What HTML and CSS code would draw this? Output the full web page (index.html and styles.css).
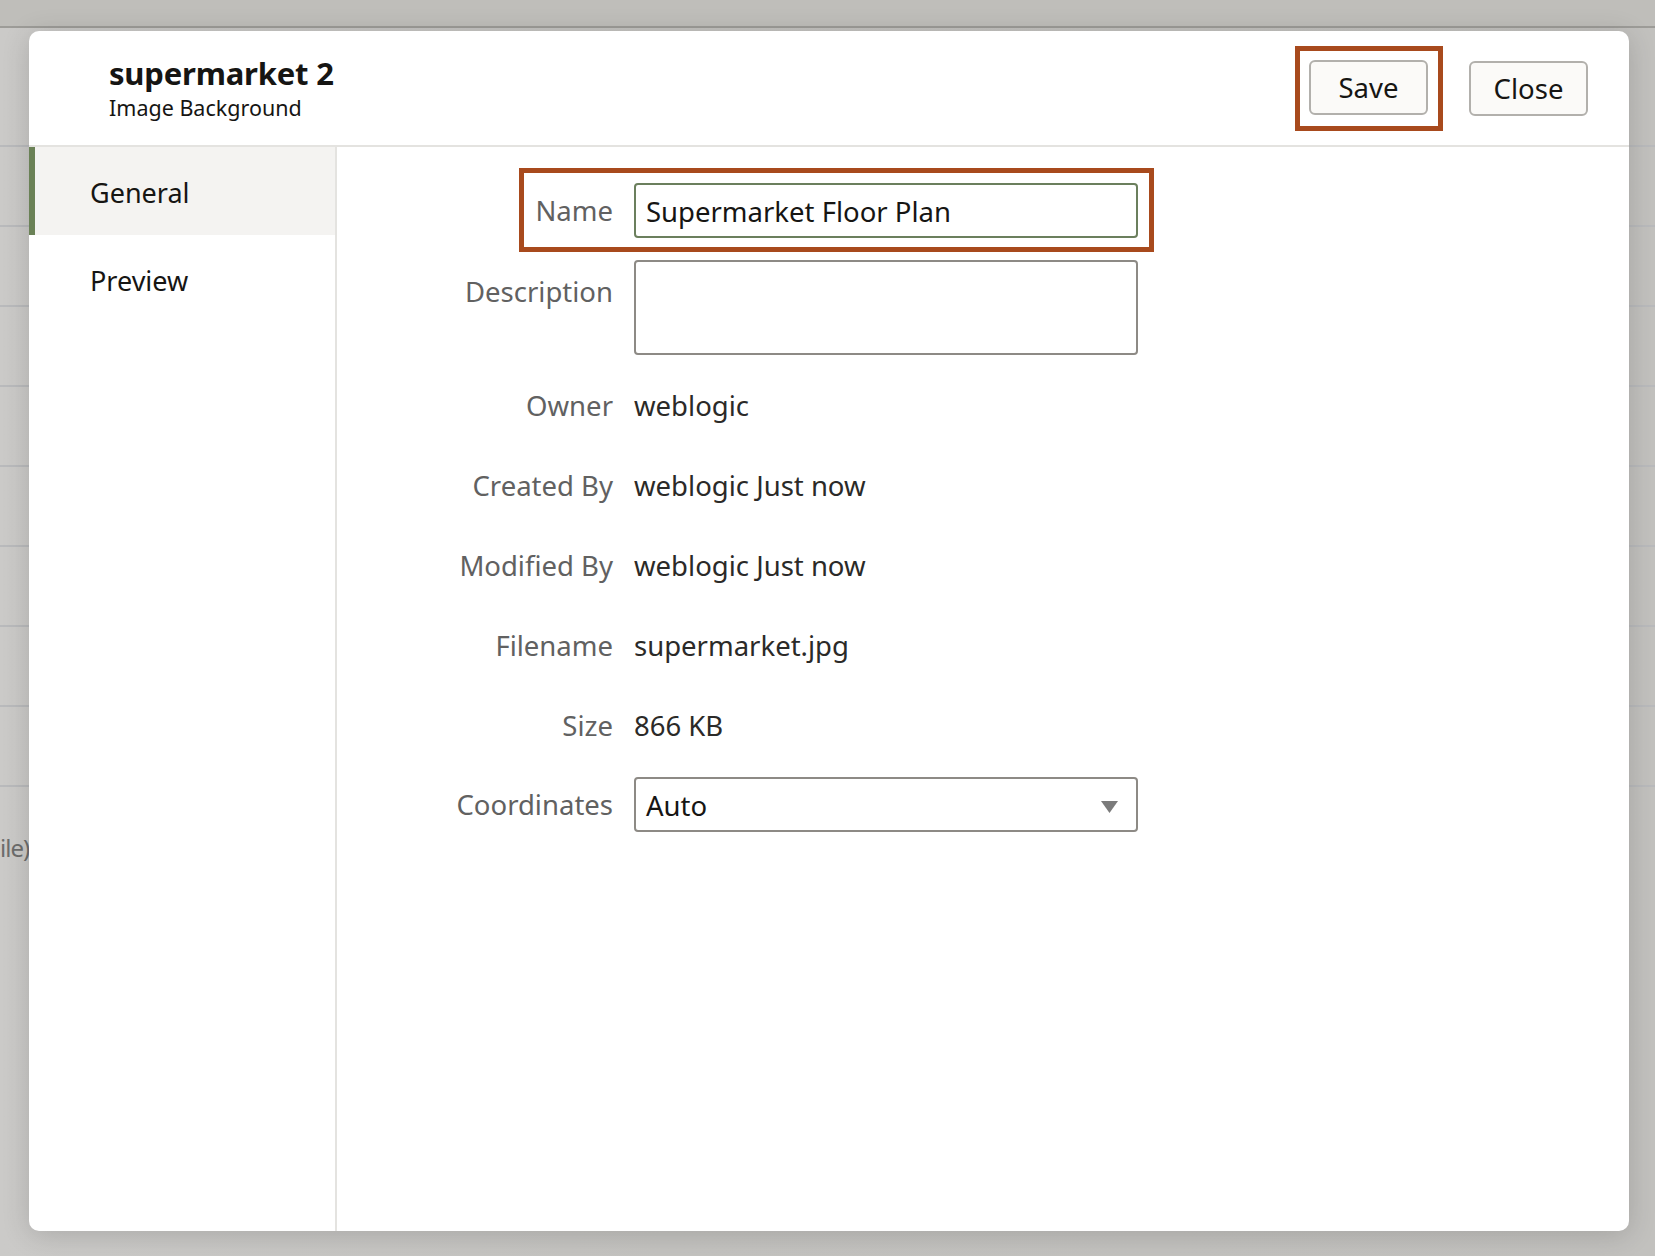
FILE: index.html
```html
<!DOCTYPE html>
<html lang="en">
<head>
<meta charset="utf-8">
<title>supermarket 2</title>
<link rel="stylesheet" href="styles.css">
</head>
<body>
<div class="backdrop">
  <div class="bg-strip"></div>
  <div class="bg-head"></div>
  <div class="bg-row"></div>
  <div class="bg-row"></div>
  <div class="bg-row"></div>
  <div class="bg-row"></div>
  <div class="bg-row"></div>
  <div class="bg-row"></div>
  <div class="bg-row"></div>
  <div class="bg-row"></div>
  <div class="bg-last"><span class="bg-text">ile)</span></div>
</div>

<div class="dialog">
  <header class="dlg-header">
    <div class="dlg-titles">
      <div class="dlg-title">supermarket 2</div>
      <div class="dlg-subtitle">Image Background</div>
    </div>
    <div class="dlg-actions">
      <span class="highlight-btn"><button class="btn">Save</button></span>
      <button class="btn">Close</button>
    </div>
  </header>
  <div class="dlg-body">
    <nav class="side">
      <div class="side-item selected">General</div>
      <div class="side-item">Preview</div>
    </nav>
    <main class="main">
      <div class="highlight-row"></div>
      <div class="form">
        <label class="lbl lbl-ctl">Name</label>
        <div class="input input-active">Supermarket Floor Plan</div>

        <label class="lbl lbl-ctl lbl-top">Description</label>
        <div class="textarea"></div>

        <div class="lbl lbl-txt">Owner</div>
        <div class="val">weblogic</div>

        <div class="lbl lbl-txt">Created By</div>
        <div class="val">weblogic Just now</div>

        <div class="lbl lbl-txt">Modified By</div>
        <div class="val">weblogic Just now</div>

        <div class="lbl lbl-txt">Filename</div>
        <div class="val">supermarket.jpg</div>

        <div class="lbl lbl-txt">Size</div>
        <div class="val">866 KB</div>

        <label class="lbl lbl-ctl">Coordinates</label>
        <div class="input select">
          <span>Auto</span>
          <svg class="caret" width="17" height="12" viewBox="0 0 17 12"><path d="M0 0H17L8.5 12Z" fill="#7b7b7b"/></svg>
        </div>
      </div>
    </main>
  </div>
</div>
</body>
</html>
```

FILE: styles.css
```css
* { box-sizing: border-box; }

html, body {
  margin: 0;
  padding: 0;
}

body {
  width: 1655px;
  height: 1256px;
  overflow: hidden;
  position: relative;
  font-family: "Noto Sans", "Open Sans", sans-serif;
  background: linear-gradient(90deg, #cbcac8 0%, #c4c3c0 40%, #c2c1be 100%);
  color: #161513;
}

/* ---------- backdrop page ---------- */
.backdrop {
  display: flex;
  flex-direction: column;
}
.bg-strip {
  height: 28px;
  background: #bfbeba;
  border-bottom: 2px solid #9d9c98;
}
.bg-head {
  height: 119px;
  border-bottom: 2px solid #b9babc;
}
.bg-row {
  height: 80px;
  border-bottom: 2px solid #b9babc;
}
.bg-last {
  padding-top: 46px;
}
.bg-text {
  display: block;
  font-size: 24px;
  line-height: 30px;
  letter-spacing: -1px;
  color: #6d6d6c;
  white-space: nowrap;
}

/* ---------- dialog ---------- */
.dialog {
  position: absolute;
  left: 29px;
  top: 31px;
  width: 1600px;
  height: 1200px;
  background: #fff;
  border-radius: 10px;
  overflow: hidden;
  display: flex;
  flex-direction: column;
  box-shadow: 0 4px 28px rgba(0, 0, 0, 0.16);
}

.dlg-header {
  height: 116px;
  flex: none;
  border-bottom: 2px solid #e4e3e0;
  display: flex;
  align-items: center;
  justify-content: space-between;
  padding: 0 41px 0 80px;
}
.dlg-title {
  font-weight: 700;
  font-size: 31px;
  line-height: 36px;
  color: #161513;
  letter-spacing: -0.2px;
}
.dlg-subtitle {
  font-size: 21.5px;
  line-height: 28px;
  margin-top: 3px;
  color: #161513;
}
.dlg-actions {
  display: flex;
  align-items: center;
  gap: 26px;
}
.highlight-btn {
  display: inline-flex;
  border: 5px solid #a84a1d;
  padding: 9px 10px 11px 9px;
}
.btn {
  width: 119px;
  height: 55px;
  background: #fbfaf8;
  border: 2px solid #b2b0ac;
  border-radius: 6px;
  font-family: inherit;
  font-size: 27.5px;
  color: #161513;
  padding: 0;
}

.dlg-body {
  flex: 1;
  display: flex;
  min-height: 0;
}

.side {
  width: 308px;
  flex: none;
  border-right: 2px solid #e4e3e0;
}
.side-item {
  height: 88px;
  display: flex;
  align-items: center;
  padding-left: 61px;
  padding-top: 3px;
  font-size: 27px;
  color: #161513;
}
.side-item.selected {
  background: #f4f3f1;
  border-left: 6px solid #6a8156;
  padding-left: 55px;
}

.main {
  flex: 1;
  position: relative;
  padding-top: 36px;
}
.highlight-row {
  position: absolute;
  left: 182px;
  top: 21px;
  width: 635px;
  height: 84px;
  border: 5px solid #a84a1d;
}

.form {
  display: grid;
  grid-template-columns: 276px 504px;
  column-gap: 21px;
  row-gap: 22px;
  align-items: start;
}
.lbl {
  text-align: right;
  font-size: 27.5px;
  color: #616161;
}
.lbl-ctl { line-height: 55px; }
.lbl-top { padding-top: 4px; }
.lbl-txt { line-height: 57px; margin-bottom: 1px; }
.val {
  font-size: 27.5px;
  line-height: 57px;
  margin-bottom: 1px;
  color: #2b2a28;
}

.input {
  height: 55px;
  border: 2px solid #8d8a85;
  border-radius: 4px;
  padding: 3px 18px 0 10px;
  font-size: 27.5px;
  line-height: 48px;
  color: #161513;
  display: flex;
  align-items: center;
}
.input-active {
  border-color: #6b7f5d;
}
.textarea {
  height: 95px;
  border: 2px solid #8d8a85;
  border-radius: 4px;
}
.select {
  justify-content: space-between;
}
.caret {
  display: block;
  margin-top: 1px;
}
```
